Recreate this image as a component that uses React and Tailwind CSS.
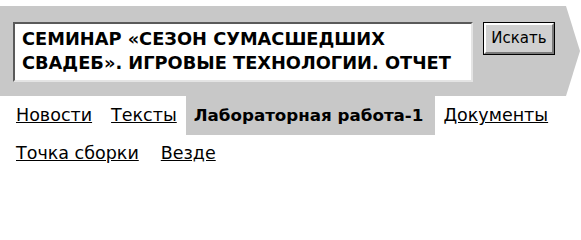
import React from "react";

export default function App() {
  return (
    <div className="w-[581px] h-[212px] bg-white overflow-hidden font-['DejaVu_Sans',Verdana,sans-serif]">
      <div className="pt-[6px]">
        <div className="h-[90px] bg-[#c8c8c8] flex items-start pl-[13px] pt-[16px] [clip-path:polygon(0_0,566px_0,580px_50%,566px_100%,0_100%)]">
          <div className="w-[460px] h-[60px] border-2 border-t-[#5a5a5a] border-l-[#5a5a5a] border-b-[#e4e4e4] border-r-[#e4e4e4] bg-white pl-[7px] pt-[3px] text-[17.8px] leading-[24px] font-bold text-black whitespace-nowrap">
            <div>СЕМИНАР «СЕЗОН СУМАСШЕДШИХ</div>
            <div>СВАДЕБ». ИГРОВЫЕ ТЕХНОЛОГИИ. ОТЧЕТ</div>
          </div>
          <div className="ml-[10px] w-[72px] h-[33px] border border-black">
            <div className="w-full h-full border-2 border-t-white border-l-white border-b-[#7a7a7a] border-r-[#7a7a7a] bg-[#d0d0d0] flex items-center justify-center text-[15px] text-black">
              Искать
            </div>
          </div>
        </div>
      </div>
      <div className="flex h-[39px] items-center text-[17.5px] text-black whitespace-nowrap">
        <a className="ml-[16px] underline">Новости</a>
        <a className="ml-[19px] underline">Тексты</a>
        <div className="ml-[9px] h-full bg-[#c8c8c8] flex items-center pl-[8px] pr-[12px] font-bold text-[16.7px]">
          Лабораторная работа-1
        </div>
        <a className="ml-[8px] underline">Документы</a>
      </div>
      <div className="flex h-[36px] items-center text-[17.5px] text-black whitespace-nowrap">
        <a className="ml-[16px] underline">Точка сборки</a>
        <a className="ml-[22px] underline">Везде</a>
      </div>
    </div>
  );
}
